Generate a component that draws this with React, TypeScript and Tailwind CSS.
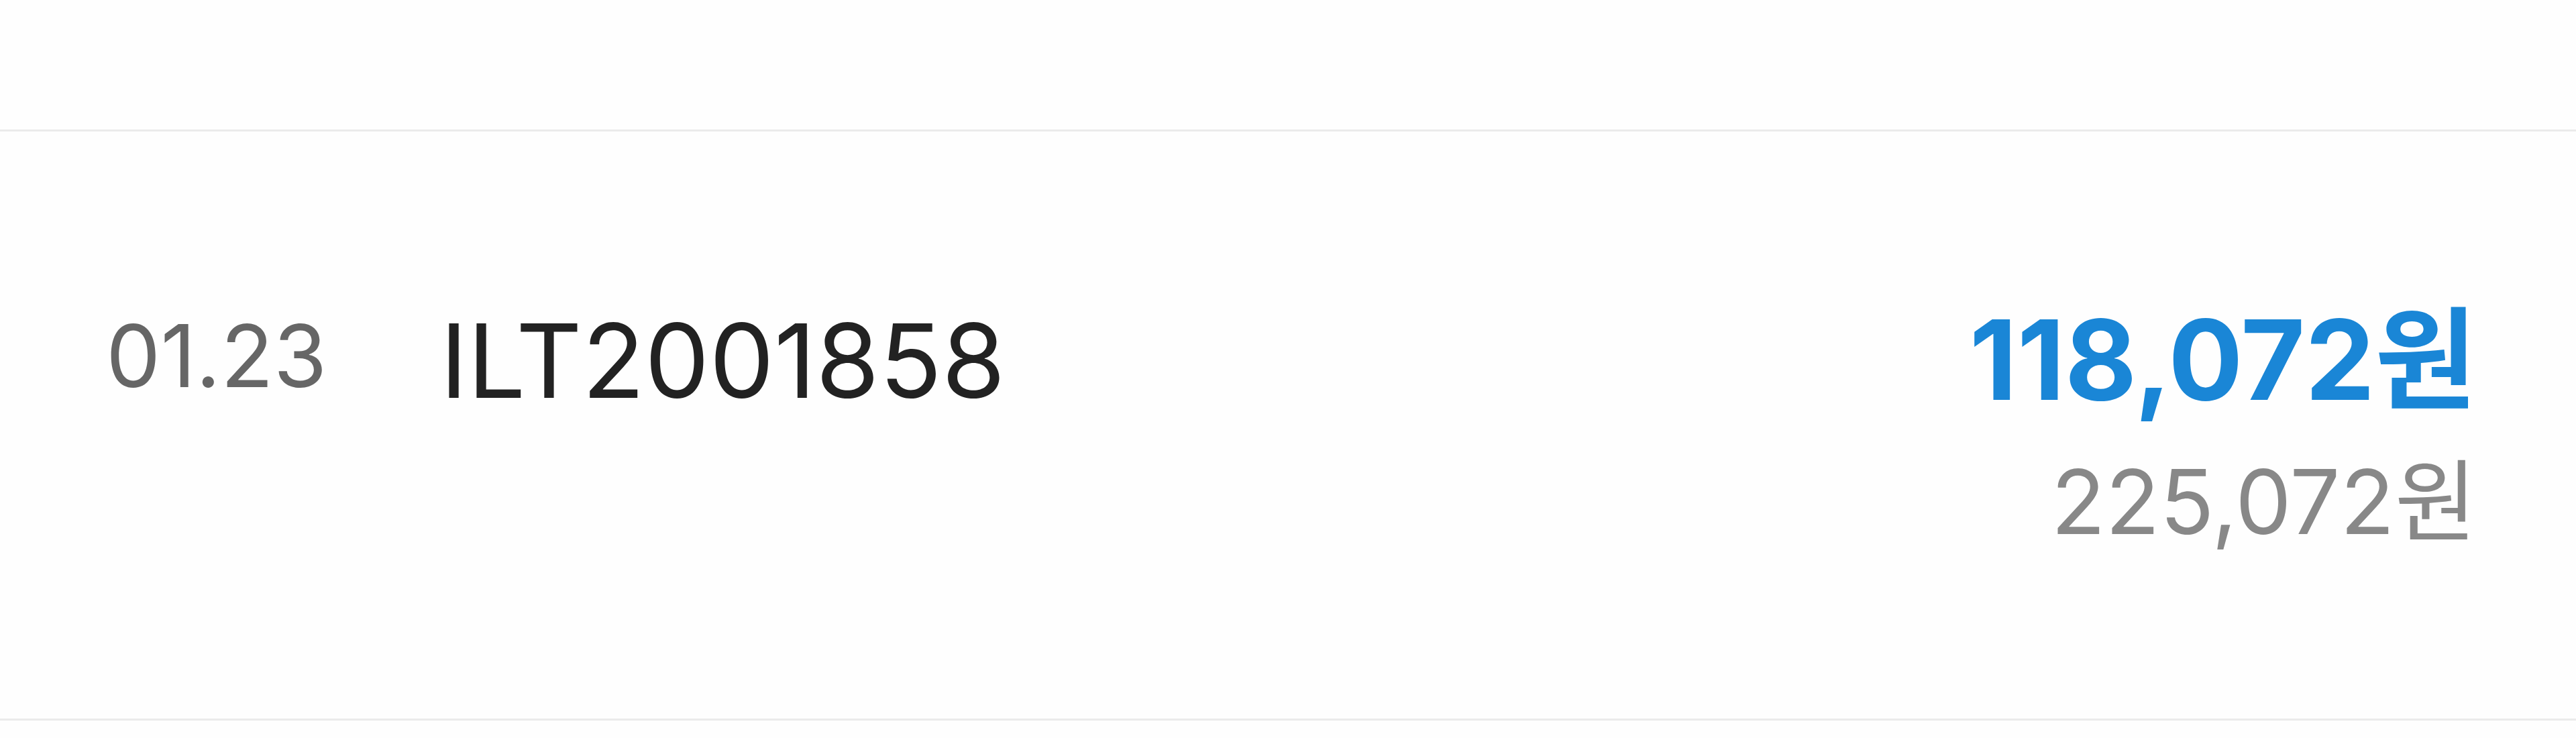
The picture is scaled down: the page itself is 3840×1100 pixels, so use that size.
import React from 'react';

const font = { fontFamily: 'Inter, "Noto Sans CJK KR", sans-serif' };

const App: React.FC = () => {
  return (
    <div className="w-[3840px] h-[1100px] bg-[#fefefe] overflow-hidden" style={font}>
      <div className="h-[193px]" />
      <div className="flex justify-between items-start border-y-[3px] border-[#ebebeb] pt-[258px] pb-[257px] pl-[158px] pr-[148px]">
        <div className="flex items-start">
          <span className="w-[498px] mt-[12px] text-[129px] leading-none text-[#666666]">01.23</span>
          <span className="mt-[7px] text-[153px] leading-none text-[#222222]">ILT2001858</span>
        </div>
        <div className="flex flex-col items-end">
          <span className="text-[165px] leading-none font-bold text-[#1a86d6]">118,072원</span>
          <span className="mt-[62px] text-[133px] leading-none text-[#888888]">225,072원</span>
        </div>
      </div>
    </div>
  );
};

export default App;
